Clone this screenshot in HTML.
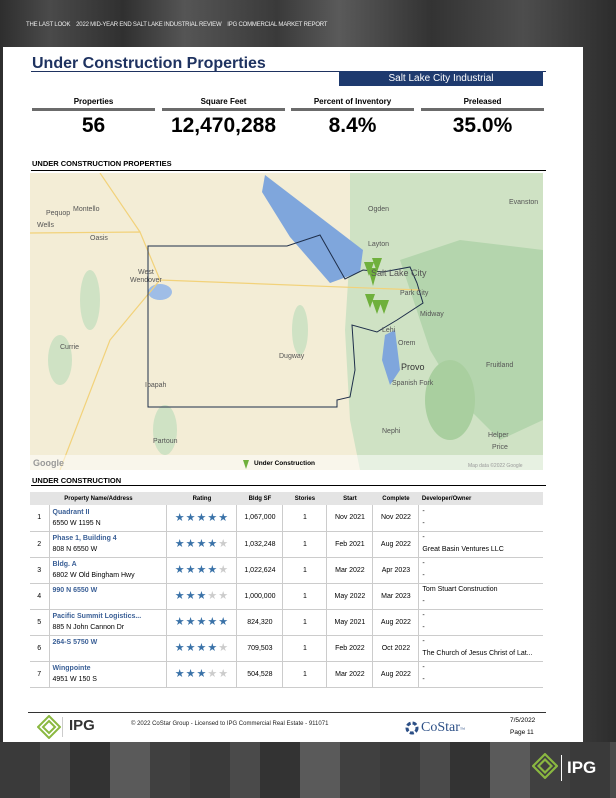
<!DOCTYPE html>
<html><head><meta charset="utf-8"><style>
*{margin:0;padding:0;box-sizing:border-box}
body{width:616px;height:798px;overflow:hidden;background:#3b3b3b;font-family:"Liberation Sans",Arial,sans-serif;position:relative}
.bg{position:absolute;inset:0;background:
linear-gradient(90deg,#2e2e2e 0,#4a4a4a 8%,#303030 20%,#555 30%,#3a3a3a 45%,#5a5a5a 55%,#333 70%,#4d4d4d 85%,#2c2c2c 100%)}
.bgb{position:absolute;left:0;top:742px;width:616px;height:56px;background:repeating-linear-gradient(90deg,#3a3a3a 0 40px,#4a4a4a 40px 70px,#333 70px 110px,#5a5a5a 110px 150px,#404040 150px 190px)}
.hdr{position:absolute;left:26px;top:22px;font-size:6px;color:#eee;letter-spacing:-.2px;white-space:nowrap}
.page{position:absolute;left:3px;top:47px;width:580px;height:695px;background:#fff}
.abs{position:absolute}
.title{left:29px;top:8px;font-size:16px;font-weight:bold;color:#1e3260;}
.tl{left:28px;top:24px;width:515px;height:1px;background:#1e3260}
.tag{left:336px;top:24px;width:204px;height:15px;background:#1e3a6e;color:#fff;font-size:10px;text-align:center;line-height:15px}
.stat{top:50px;width:123px;text-align:center}
.stat .l{font-size:8px;font-weight:bold;height:11px}
.stat .b{height:3px;background:#6b6b6b}
.stat .v{font-size:21px;font-weight:bold;margin-top:3px}
.sec{left:29px;font-size:7.5px;font-weight:bold}
.sl{left:28px;width:515px;height:1px;background:#000}
table{position:absolute;left:27px;top:445px;width:513px;border-collapse:collapse;font-size:7px}
th{background:#e4e4e4;font-size:6px;height:13px;font-weight:bold;text-align:center}
tr.r{height:26px}
td{border-bottom:1px solid #ccc;text-align:center;vertical-align:middle;padding:0}
td+td{border-left:1px solid #ccc}
td.n{text-align:left;padding-left:3px;line-height:11px}
td.n b{color:#3a5f96;font-weight:bold}
td.d{text-align:left;padding-left:3px;line-height:12px;font-size:7px}
.st{color:#3a72a8;font-size:11px;letter-spacing:1px;line-height:12px}
.st i{color:#ccc;font-style:normal}
</style></head><body>
<div class="bg"></div><div class="bgb"></div>
<div class="hdr">THE LAST LOOK &nbsp;&nbsp; 2022 MID-YEAR END SALT LAKE INDUSTRIAL REVIEW &nbsp;&nbsp; IPG COMMERCIAL MARKET REPORT</div>
<div class="page">
<div class="abs title">Under Construction Properties</div>
<div class="abs tl"></div>
<div class="abs tag">Salt Lake City Industrial</div>
<div class="abs stat" style="left:29px"><div class="l">Properties</div><div class="b"></div><div class="v">56</div></div>
<div class="abs stat" style="left:159px"><div class="l">Square Feet</div><div class="b"></div><div class="v">12,470,288</div></div>
<div class="abs stat" style="left:288px"><div class="l">Percent of Inventory</div><div class="b"></div><div class="v">8.4%</div></div>
<div class="abs stat" style="left:418px"><div class="l">Preleased</div><div class="b"></div><div class="v">35.0%</div></div>
<div class="abs sec" style="top:112px">UNDER CONSTRUCTION PROPERTIES</div>
<div class="abs sl" style="top:123px"></div>
<svg class="abs" style="left:27px;top:126px" width="513" height="297" viewBox="30 173 513 297">
<rect x="30" y="173" width="513" height="297" fill="#f3edd6"/>
<path d="M350 173 L543 173 L543 470 L360 470 L350 420 L345 330 L350 250 Z" fill="#cfe2c4"/>
<path d="M400 260 L460 240 L543 250 L543 420 L500 440 L460 400 L430 350 Z" fill="#b4d5ad"/>
<ellipse cx="450" cy="400" rx="25" ry="40" fill="#a9cf9f"/>
<ellipse cx="90" cy="300" rx="10" ry="30" fill="#cfe2c4"/>
<ellipse cx="60" cy="360" rx="12" ry="25" fill="#cfe2c4"/>
<ellipse cx="165" cy="430" rx="12" ry="25" fill="#cfe2c4"/>
<ellipse cx="300" cy="330" rx="8" ry="25" fill="#cfe2c4"/>
<path d="M265 175 L363 250 L360 272 L330 283 L290 237 L262 192 Z" fill="#7fa6dc"/>
<path d="M385 335 L395 330 L400 370 L390 385 L382 360 Z" fill="#7fa6dc"/>
<ellipse cx="160" cy="292" rx="12" ry="8" fill="#9fbde6"/>
<path d="M30 233 L140 232 L160 280 L420 290 M100 173 L140 232 M60 470 L110 340 L160 280" stroke="#f2d27a" stroke-width="1.2" fill="none"/>
<path d="M148 246 L287 246 L320 235 L345 279 L363 270 L383 272 L410 267 L417 283 L423 303 L397 320 L377 332 L352 325 L355 370 L350 397 L337 400 L337 407 L148 407 Z" fill="none" stroke="#1e2e4a" stroke-width="1"/>
<g fill="#6fb03c"><path d="M364 262 l10 0 l-5 14z"/><path d="M372 258 l10 0 l-5 14z"/><path d="M368 268 l10 0 l-5 18z"/><path d="M365 294 l10 0 l-5 14z"/><path d="M372 300 l10 0 l-5 14z"/><path d="M379 300 l10 0 l-5 14z"/></g>
<g font-size="7" fill="#555" font-family="Liberation Sans"><text x="371" y="276" font-size="9">Salt Lake City</text><text x="73" y="211">Montello</text><text x="46" y="215">Pequop</text><text x="37" y="227">Wells</text><text x="90" y="240">Oasis</text><text x="138" y="274">West</text><text x="130" y="282">Wendover</text><text x="368" y="211">Ogden</text><text x="368" y="246">Layton</text><text x="509" y="204">Evanston</text><text x="400" y="295">Park City</text><text x="420" y="316">Midway</text><text x="382" y="332">Lehi</text><text x="398" y="345">Orem</text><text x="401" y="370" font-size="9" fill="#333">Provo</text><text x="392" y="385">Spanish Fork</text><text x="279" y="358">Dugway</text><text x="60" y="349">Currie</text><text x="145" y="387">Ibapah</text><text x="153" y="443">Partoun</text><text x="382" y="433">Nephi</text><text x="486" y="367">Fruitland</text><text x="488" y="437">Helper</text><text x="492" y="449">Price</text></g>
<rect x="30" y="455" width="513" height="15" fill="#fff" opacity=".5"/>
<text x="33" y="466" font-size="9" fill="#999" font-weight="bold" font-family="Liberation Sans">Google</text>
<path d="M243 460 h6 l-3 9z" fill="#6fb03c"/>
<text x="254" y="465" font-size="6.5" font-weight="bold" font-family="Liberation Sans">Under Construction</text>
<text x="468" y="467" font-size="5" fill="#999" font-family="Liberation Sans">Map data ©2022 Google</text>
</svg>
<div class="abs sec" style="top:429px">UNDER CONSTRUCTION</div>
<div class="abs sl" style="top:438px"></div>
<table>
<tr><th colspan="2" style="width:127px">Property Name/Address</th><th style="width:70px">Rating</th><th style="width:46px">Bldg SF</th><th style="width:44px">Stories</th><th style="width:46px">Start</th><th style="width:46px">Complete</th><th style="text-align:left;padding-left:3px">Developer/Owner</th></tr>
<tr class="r"><td style="width:19px">1</td><td class="n"><b>Quadrant II</b><br>6550 W 1195 N</td><td class="st">★★★★★</td><td>1,067,000</td><td>1</td><td>Nov 2021</td><td>Nov 2022</td><td class="d">-<br>-</td></tr>
<tr class="r"><td>2</td><td class="n"><b>Phase 1, Building 4</b><br>808 N 6550 W</td><td class="st">★★★★<i>★</i></td><td>1,032,248</td><td>1</td><td>Feb 2021</td><td>Aug 2022</td><td class="d">-<br>Great Basin Ventures LLC</td></tr>
<tr class="r"><td>3</td><td class="n"><b>Bldg. A</b><br>6802 W Old Bingham Hwy</td><td class="st">★★★★<i>★</i></td><td>1,022,624</td><td>1</td><td>Mar 2022</td><td>Apr 2023</td><td class="d">-<br>-</td></tr>
<tr class="r"><td>4</td><td class="n"><b>990 N 6550 W</b><br>&nbsp;</td><td class="st">★★★<i>★★</i></td><td>1,000,000</td><td>1</td><td>May 2022</td><td>Mar 2023</td><td class="d">Tom Stuart Construction<br>-</td></tr>
<tr class="r"><td>5</td><td class="n"><b>Pacific Summit Logistics...</b><br>885 N John Cannon Dr</td><td class="st">★★★★★</td><td>824,320</td><td>1</td><td>May 2021</td><td>Aug 2022</td><td class="d">-<br>-</td></tr>
<tr class="r"><td>6</td><td class="n"><b>264-S 5750 W</b><br>&nbsp;</td><td class="st">★★★★<i>★</i></td><td>709,503</td><td>1</td><td>Feb 2022</td><td>Oct 2022</td><td class="d">-<br>The Church of Jesus Christ of Lat...</td></tr>
<tr class="r"><td>7</td><td class="n"><b>Wingpointe</b><br>4951 W 150 S</td><td class="st">★★★<i>★★</i></td><td>504,528</td><td>1</td><td>Mar 2022</td><td>Aug 2022</td><td class="d">-<br>-</td></tr>
</table>
<div class="abs" style="left:25px;top:665px;width:518px;height:1px;background:#333"></div>
<svg class="abs" style="left:34px;top:668px" width="24" height="24" viewBox="0 0 24 24"><g fill="none" stroke="#8ab840" stroke-width="2"><path d="M12 1 L23 12 L12 23 L1 12 Z"/><path d="M12 6 L18 12 L12 18 L6 12 Z"/></g></svg>
<div class="abs" style="left:59px;top:670px;width:1px;height:20px;background:#ccc"></div>
<div class="abs" style="left:66px;top:670px;font-size:15px;font-weight:bold;color:#333">IPG</div>
<div class="abs" style="left:128px;top:674px;font-size:6px;color:#222">© 2022 CoStar Group - Licensed to IPG Commercial Real Estate - 911071</div>
<svg class="abs" style="left:402px;top:674px" width="14" height="14" viewBox="0 0 14 14"><circle cx="7" cy="7" r="5" fill="none" stroke="#2c4f86" stroke-width="3" stroke-dasharray="4 2"/></svg>
<div class="abs" style="left:418px;top:673px;font-size:14px;font-family:'Liberation Serif',serif;color:#2c4f86">CoStar<span style="font-size:5px">™</span></div>
<div class="abs" style="left:507px;top:668px;font-size:6.5px;line-height:12px">7/5/2022<br>Page 11</div>
</div>
<svg class="abs" style="left:532px;top:753px" width="26" height="26" viewBox="0 0 24 24"><g fill="none" stroke="#8ab840" stroke-width="2"><path d="M12 1 L23 12 L12 23 L1 12 Z"/><path d="M12 6 L18 12 L12 18 L6 12 Z"/></g></svg>
<div class="abs" style="left:561px;top:755px;width:1px;height:26px;background:#fff"></div>
<div class="abs" style="left:567px;top:758px;font-size:17px;font-weight:bold;color:#fff">IPG</div>
</body></html>
